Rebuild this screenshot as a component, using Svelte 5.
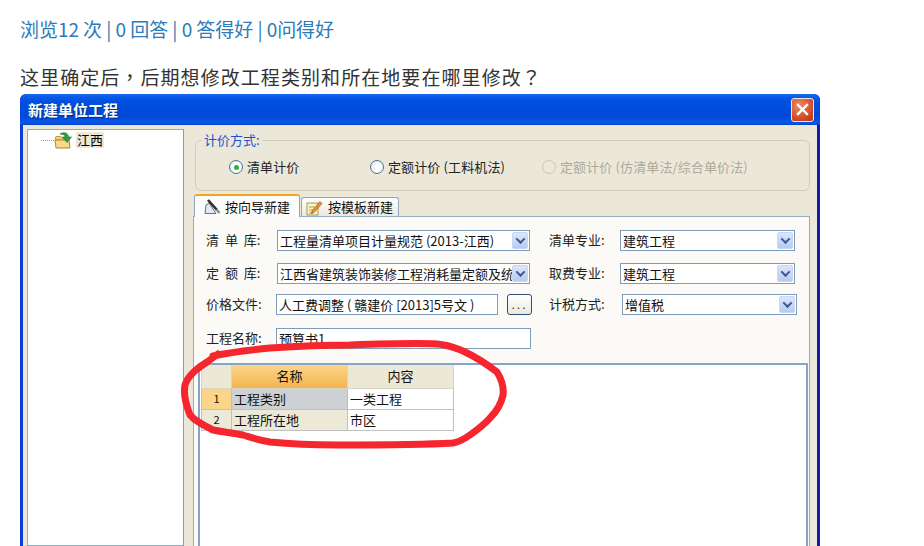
<script>
  const pathD = "M213 356 C 232 352 250 350 270 348 C 300 346 320 345 350 345 C 380 344 415 343 437 344 C 450 345 455 348 463 351 C 478 358 488 365 497 372 C 502 380 504 387 503 395 C 501 405 497 411 490 418 C 484 425 477 430 470 435 C 463 440 458 442 453 443 C 420 445 380 445 337 445 C 312 445 290 444 270 442 C 258 440 250 437 243 435 C 233 433 223 432 213 430 C 203 425 195 421 190 415 C 186 405 183 395 185 385 C 188 375 198 368 207 362 L 218 354";
</script>

<div class="page">
  <p class="stats">浏览12 次 | 0 回答 | 0 答得好 | 0问得好</p>
  <p class="question">这里确定后<span class="punct">，</span>后期想修改工程类别和所在地要在哪里修改<span class="punct">？</span></p>

  <div class="window">
    <div class="titlebar">
      <span class="title">新建单位工程</span>
      <span class="close">
        <svg width="13" height="13" viewBox="0 0 13 13"><path d="M2 2 L11 11 M11 2 L2 11" stroke="#fff" stroke-width="2.4" stroke-linecap="square" /></svg>
      </span>
    </div>
    <div class="client">
      <div class="tree">
        <div class="node">
          <span class="dots"></span>
          <svg class="folder" width="19" height="19" viewBox="0 0 19 19">
            <path d="M1 8 L2 5.5 L7 5.5 L8 7 L14 7 L14 9 L4 9 Z" fill="#f5d27a" stroke="#b5842a" stroke-width="0.8" />
            <path d="M1 9 L15 9 L16 17 L2 17 Z" fill="#f7d98c" stroke="#b5842a" stroke-width="1" />
            <path d="M6 3 C 10 0.5 14 1.5 14.5 6 L17.5 6 L13 11.5 L8.5 6 L11 6 C 11 4 9 3 6 3 Z" fill="#2f9e3f" stroke="#1b6e2b" stroke-width="0.6" />
          </svg>
          <span class="nodetext">江西</span>
        </div>
      </div>

      <div class="main">
        <fieldset class="mode">
          <legend>计价方式:</legend>
          <label class="opt first"><span class="radio on"></span>清单计价</label>
          <label class="opt second"><span class="radio"></span>定额计价 (工料机法)</label>
          <label class="opt third"><span class="radio off"></span>定额计价 (仿清单法/综合单价法)</label>
        </fieldset>

        <div class="tabs">
          <div class="tab active">
            <svg width="17" height="17" viewBox="0 0 17 17">
              <path d="M1 15.5 L2 7 L5 5 L12 15.5 Z" fill="#e3e9f5" stroke="#5a6f9c" />
              <path d="M4 2 L13 12" stroke="#2e2e2e" stroke-width="2.6" />
              <path d="M12.5 11.5 L15.5 15" stroke="#8a8f98" stroke-width="2.6" />
            </svg>
            按向导新建
          </div>
          <div class="tab">
            <svg width="18" height="17" viewBox="0 0 18 17">
              <rect x="2" y="4" width="11" height="12" fill="#fbf3c4" stroke="#a89a55" />
              <path d="M4 8 H10 M4 11 H9 M4 14 H8" stroke="#a89a55" />
              <path d="M7 12 L15 2.5 L17 4.5 L9 13.5 L6.5 14.5 Z" fill="#e8923a" stroke="#9a5a1a" stroke-width="0.7" />
            </svg>
            按模板新建
          </div>
        </div>

        <div class="panel">
          <div class="form">
            <div class="col left">
              <div class="row r1">
                <span class="lab spaced">清 单 库:</span>
                <div class="combo w253"><span class="val">工程量清单项目计量规范 (2013-江西)</span><span class="arrow"><i></i></span></div>
              </div>
              <div class="row r2">
                <span class="lab spaced">定 额 库:</span>
                <div class="combo w253"><span class="val">江西省建筑装饰装修工程消耗量定额及统一基价表</span><span class="arrow"><i></i></span></div>
              </div>
              <div class="row r3">
                <span class="lab">价格文件:</span>
                <div class="text w222 shift">人工费调整 ( 赣建价 [2013]5号文 )</div>
                <button class="dots-btn">...</button>
              </div>
              <div class="row r4">
                <span class="lab">工程名称:</span>
                <div class="text w255 shift">预算书1</div>
              </div>
            </div>
            <div class="col right">
              <div class="row r1">
                <span class="lab wide">清单专业:</span>
                <div class="combo w175"><span class="val">建筑工程</span><span class="arrow"><i></i></span></div>
              </div>
              <div class="row r2">
                <span class="lab wide">取费专业:</span>
                <div class="combo w175"><span class="val">建筑工程</span><span class="arrow"><i></i></span></div>
              </div>
              <div class="row r3">
                <span class="lab wide nudge">计税方式:</span>
                <div class="combo w175"><span class="val">增值税</span><span class="arrow"><i></i></span></div>
              </div>
            </div>
          </div>

          <div class="listbox">
            <table>
              <thead>
                <tr><th class="idx"></th><th class="sel">名称</th><th class="c">内容</th></tr>
              </thead>
              <tbody>
                <tr><td class="idx cur">1</td><td class="n focus">工程类别</td><td class="v">一类工程</td></tr>
                <tr><td class="idx">2</td><td class="n">工程所在地</td><td class="v">市区</td></tr>
              </tbody>
            </table>
          </div>
        </div>
      </div>
    </div>
  </div>

  <svg class="scribble" width="924" height="546" viewBox="0 0 924 546">
    <path d={pathD} fill="none" stroke="#f5262e" stroke-width="7" stroke-linecap="round" stroke-linejoin="round" />
  </svg>
</div>

<style>
  :global(body) { margin: 0; background: #fff; }
  .page {
    position: relative;
    width: 924px;
    height: 546px;
    overflow: hidden;
    font-family: "Noto Sans CJK SC", "Liberation Sans", sans-serif;
    display: flex;
    flex-direction: column;
    background: #fff;
  }
  p { margin: 0; padding-left: 20px; font-size: 19px; line-height: 26px; }
  .stats { margin-top: 16px; color: #2b7cb8; letter-spacing: -0.05px; }
  .question { margin-top: 22px; color: #333; letter-spacing: 1.07px; height: 30px; }
  .punct { font-family: "Noto Sans CJK TC", sans-serif; }

  .window {
    margin-left: 20px;
    width: 800px;
    flex: 1;
    display: flex;
    flex-direction: column;
    min-height: 0;
    border-radius: 6px 6px 0 0;
    background: #0a3fd6;
  }
  .titlebar {
    height: 31px;
    flex: none;
    display: flex;
    align-items: center;
    justify-content: space-between;
    padding: 0 6px 0 8px;
    border-radius: 6px 6px 0 0;
    background: linear-gradient(#1a6af0 0, #0a5ae8 3px, #0050e0 8px, #0048d8 22px, #0a58e8 29px, #0040c8 31px);
  }
  .title { color: #fff; font-size: 15px; font-weight: 700; text-shadow: 1px 1px 1px #0a2a80; }
  .close {
    width: 21px; height: 22px;
    display: flex; align-items: center; justify-content: center;
    border: 1px solid #f0e6e0;
    border-radius: 3px;
    background: radial-gradient(circle at 35% 30%, #ee8a68, #d0451f 70%, #bd3514);
  }
  .client {
    flex: 1;
    min-height: 0;
    display: flex;
    margin: 0 0 0 3px;
    padding: 4px 7px 0 4px;
    background: #ebe8d9;
    gap: 8px;
    box-sizing: border-box;
    border-right: 3px solid #0a1fb0;
  }
  .tree {
    width: 155px;
    flex: none;
    background: #fff;
    border: 1px solid #8fa9c8;
    border-right-color: #9a9a8c;
  }
  .node { display: flex; align-items: center; height: 20px; margin-top: 0; padding-left: 13px; }
  .dots { width: 13px; border-top: 1px dotted #999; margin-top: 1px; }
  .folder { margin: 0 3px 0 0; flex: none; }
  .nodetext { background: #ebe8d9; font-size: 13px; color: #000; line-height: 16px; padding: 0 1px; }

  .main { flex: 1; min-width: 0; display: flex; flex-direction: column; margin-left: 1px; }

  .mode {
    position: relative;
    margin: 11px 0 0 2px;
    padding: 0;
    width: 615px;
    height: 51px;
    box-sizing: border-box;
    border: 1px solid #d0cdb8;
    border-radius: 6px;
    flex: none;
  }
  legend { color: #1a52d0; font-size: 13px; line-height: 14px; margin-left: 6px; padding: 0 2px; height: 1px; position: relative; top: -7px; }
  .opt {
    position: absolute;
    top: 16px;
    display: flex;
    align-items: center;
    font-size: 13px;
    line-height: 20px;
    color: #222;
    white-space: nowrap;
    letter-spacing: 0.12px;
  }
  .first { left: 33px; }
  .second { left: 174px; }
  .third { left: 346px; color: #aca899; }
  .radio {
    width: 12px; height: 12px;
    margin-right: 4px;
    border: 1px solid #4a6f9e;
    border-radius: 50%;
    background: radial-gradient(circle at 60% 60%, #fff 30%, #dfe3e6);
    display: flex; align-items: center; justify-content: center;
    flex: none;
  }
  .radio.on::after { content: ""; width: 5px; height: 5px; border-radius: 50%; background: #32b03c; }
  .radio.off { border-color: #c8c5b2; background: none; }

  .tabs { display: flex; align-items: flex-end; height: 22px; margin-top: 3px; flex: none; padding-left: 1px; position: relative; z-index: 1; }
  .tab {
    height: 19px;
    box-sizing: border-box;
    display: flex; align-items: center; gap: 5px;
    padding-left: 3px;
    width: 98px;
    margin-left: 1px;
    font-size: 13px;
    color: #111;
    background: linear-gradient(#fff, #ece9dc);
    border: 1px solid #8fa6bd;
    border-bottom: none;
    border-radius: 3px 3px 0 0;
    line-height: 14px;
    white-space: nowrap;
  }
  .tab.active {
    height: 23px;
    width: 106px;
    margin-left: 0;
    padding-left: 9px;
    gap: 4px;
    background: #fcfcfa;
    border-top: 2px solid #f2a61e;
    margin-bottom: -1px;
  }
  .tab svg { flex: none; }

  .panel {
    flex: 1;
    min-height: 0;
    background: #fbfaf6;
    border: 1px solid #95aec8;
    border-bottom: none;
    border-right-color: #a8a698;
    box-sizing: border-box;
    display: flex;
    flex-direction: column;
    width: 617px;
  }
  .form { display: flex; height: 146px; flex: none; padding-left: 12px; }
  .col { display: flex; flex-direction: column; }
  .left { width: 343px; }
  .right { flex: 1; }
  .row { display: flex; align-items: center; height: 21px; }
  .r1 { margin-top: 13px; }
  .r2 { margin-top: 12px; }
  .r3 { margin-top: 10px; }
  .r4 { margin-top: 13px; }

  .lab { width: 71px; flex: none; font-size: 13px; color: #222; white-space: pre; padding-bottom: 2px; }
  .lab.spaced { word-spacing: 3px; }
  .lab.wide { width: 71px; }
  .lab.nudge { width: 73px; }
  .combo, .text {
    height: 21px;
    box-sizing: border-box;
    border: 1px solid #7f9db9;
    background: #fff;
    display: flex;
    align-items: center;
    font-size: 13px;
    color: #111;
    white-space: nowrap;
    overflow: hidden;
  }
  .combo { padding: 1px; }
  .val { flex: 1; min-width: 0; overflow: hidden; padding-left: 1px; }
  .w253 { width: 253px; }
  .w175 { width: 175px; }
  .w222 { width: 222px; }
  .w255 { width: 255px; }
  .text { padding: 0 0 1px 2px; }
  .shift { margin-left: -1px; }
  .arrow {
    width: 16px;
    height: 17px;
    flex: none;
    border-radius: 2px;
    background: linear-gradient(#dbe6fb, #b7cbf0);
    border: 1px solid #c8d6f0;
    box-sizing: border-box;
    display: flex;
    align-items: center;
    justify-content: center;
  }
  .arrow i {
    width: 5px; height: 5px;
    border-right: 2px solid #3a5a8c;
    border-bottom: 2px solid #3a5a8c;
    transform: rotate(45deg) translate(-1px, -1px);
  }
  .dots-btn {
    width: 25px; height: 21px;
    margin-left: 9px;
    padding: 0;
    border: 1px solid #2f4f78;
    border-radius: 3px;
    background: linear-gradient(#fff, #ece9dc);
    font: 12px "Liberation Sans", sans-serif;
    letter-spacing: 2px;
    color: #222;
  }

  .listbox {
    flex: 1;
    min-height: 0;
    margin: 0 1px 0 4px;
    background: #fff;
    border: 2px solid #84a5c8;
    border-bottom: none;
    padding: 0 0 0 1px;
  }
  table {
    border-collapse: collapse;
    table-layout: fixed;
    width: 252px;
    font-size: 13px;
    color: #111;
  }
  th, td { border: 1px solid #c0c0c0; padding: 0 0 1px; height: 21px; box-sizing: border-box; white-space: nowrap; }
  th { font-weight: 400; height: 23px; background: #ebe8d6; border-top: none; border-color: #d8d5c5; }
  th.sel { background: linear-gradient(#fbd58a, #f2b44e); width: 116px; }
  th.idx { width: 30px; }
  th.c { width: 106px; }
  td.idx { background: #ece9d8; text-align: center; font-size: 11px; }
  td.cur { background: #fbd58a; }
  td.n { background: #ece9d8; padding-left: 2px; }
  td.focus { background: #ccd2d4; }
  td.v { background: #fff; padding-left: 2px; }

  .scribble { position: absolute; inset: 0; pointer-events: none; }
</style>
